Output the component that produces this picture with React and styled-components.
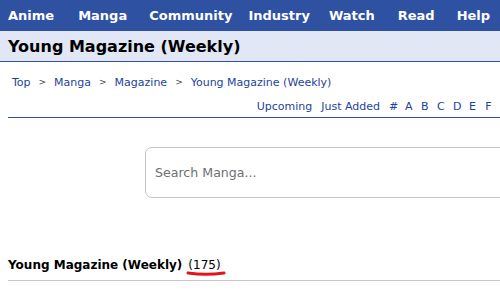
import React from "react";
import styled, { createGlobalStyle } from "styled-components";

const Global = createGlobalStyle`
  html, body { margin: 0; padding: 0; background: #fff; overflow: hidden; }
  body { font-family: Verdana, "DejaVu Sans", sans-serif; }
`;

const Page = styled.div`
  width: 812px;
`;

const Nav = styled.nav`
  display: flex;
  align-items: center;
  height: 31px;
  background: #2e51a2;
  padding-left: 8px;
`;

const NavItem = styled.a`
  color: #fff;
  font-weight: bold;
  font-size: 13px;
  text-decoration: none;
  margin-right: ${(p) => p.$gap}px;
`;

const TitleBar = styled.div`
  height: 30px;
  background: #e1e7f5;
  border-bottom: 1px solid #2e51a2;
  display: flex;
  align-items: center;
  padding-left: 8px;
`;

const Title = styled.h1`
  margin: 0;
  font-size: 16px;
  font-weight: bold;
  color: #000;
`;

const Content = styled.div`
  padding: 0 0 0 8px;
`;

const Breadcrumb = styled.div`
  display: flex;
  gap: 8px;
  padding: 12px 0 0 4px;
  height: 16px;
  font-size: 11px;
  color: #1d439b;
  align-items: center;
`;

const Sep = styled.span`
  color: #444;
  font-size: 9px;
`;

const LinkRow = styled.div`
  display: flex;
  justify-content: flex-end;
  gap: 9px;
  margin-top: 10px;
  padding-bottom: 4px;
  border-bottom: 1px solid #2e51a2;
  font-size: 11px;
  color: #1d439b;
`;

const Letter = styled.span`
  width: 7px;
  text-align: center;
`;

const SearchWrap = styled.div`
  padding: 29px 0 0 137px;
`;

const SearchInput = styled.input`
  box-sizing: border-box;
  width: 520px;
  height: 51px;
  border: 1px solid #c4c4c4;
  border-radius: 7px;
  padding: 0 9px;
  font-family: Verdana, "DejaVu Sans", sans-serif;
  font-size: 12.6px;
  color: #333;
  outline: none;
  &::placeholder { color: #707070; }
`;

const Heading = styled.div`
  margin-top: 60px;
  padding-bottom: 8px;
  border-bottom: 1px solid #c8c8c8;
  font-size: 12px;
  color: #000;
  display: flex;
  gap: 6px;
`;

const HeadName = styled.span`
  font-weight: bold;
`;

const Count = styled.span`
  position: relative;
`;

const Mark = styled.svg`
  position: absolute;
  left: -1px;
  top: 12px;
  width: 38px;
  height: 6px;
  overflow: visible;
`;

const navItems = [
  ["Anime", 24],
  ["Manga", 22],
  ["Community", 16],
  ["Industry", 19],
  ["Watch", 23],
  ["Read", 22],
  ["Help", 0],
];

const letters = ["#", ..."ABCDEFGHIJKLMNOPQRSTUVWXYZ"];

export default function App() {
  return (
    <Page>
      <Global />
      <Nav>
        {navItems.map(([t, g]) => (
          <NavItem key={t} $gap={g}>{t}</NavItem>
        ))}
      </Nav>
      <TitleBar>
        <Title>Young Magazine (Weekly)</Title>
      </TitleBar>
      <Content>
        <Breadcrumb>
          <span>Top</span><Sep>&gt;</Sep>
          <span>Manga</span><Sep>&gt;</Sep>
          <span>Magazine</span><Sep>&gt;</Sep>
          <span>Young Magazine (Weekly)</span>
        </Breadcrumb>
        <LinkRow>
          <span>Upcoming</span>
          <span>Just Added</span>
          {letters.map((l) => (
            <Letter key={l}>{l}</Letter>
          ))}
        </LinkRow>
        <SearchWrap>
          <SearchInput placeholder="Search Manga..." />
        </SearchWrap>
        <Heading>
          <HeadName>Young Magazine (Weekly)</HeadName>
          <Count>
            (175)
            <Mark viewBox="0 0 38 6">
              <path d="M1 3 Q19 5.5 37 3" stroke="#e0161d" strokeWidth="3" fill="none" strokeLinecap="round" />
            </Mark>
          </Count>
        </Heading>
      </Content>
    </Page>
  );
}
